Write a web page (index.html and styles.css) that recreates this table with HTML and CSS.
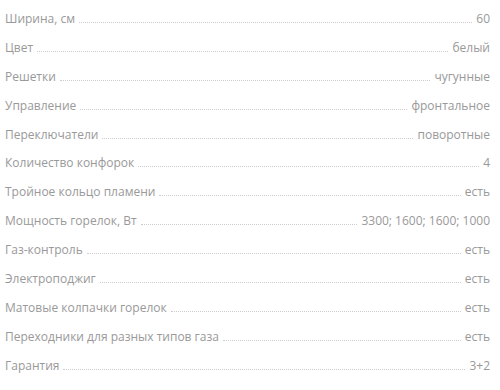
FILE: index.html
```html
<!DOCTYPE html>
<html lang="ru">
<head>
<meta charset="utf-8">
<link rel="stylesheet" href="styles.css">
</head>
<body>
<ul class="specs">
  <li class="row"><span class="name">Ширина, см</span><span class="dots"></span><span class="val">60</span></li>
  <li class="row"><span class="name">Цвет</span><span class="dots"></span><span class="val">белый</span></li>
  <li class="row"><span class="name">Решетки</span><span class="dots"></span><span class="val">чугунные</span></li>
  <li class="row"><span class="name">Управление</span><span class="dots"></span><span class="val">фронтальное</span></li>
  <li class="row"><span class="name">Переключатели</span><span class="dots"></span><span class="val">поворотные</span></li>
  <li class="row"><span class="name">Количество конфорок</span><span class="dots"></span><span class="val">4</span></li>
  <li class="row"><span class="name">Тройное кольцо пламени</span><span class="dots"></span><span class="val">есть</span></li>
  <li class="row"><span class="name">Мощность горелок, Вт</span><span class="dots"></span><span class="val">3300; 1600; 1600; 1000</span></li>
  <li class="row"><span class="name">Газ-контроль</span><span class="dots"></span><span class="val">есть</span></li>
  <li class="row"><span class="name">Электроподжиг</span><span class="dots"></span><span class="val">есть</span></li>
  <li class="row"><span class="name">Матовые колпачки горелок</span><span class="dots"></span><span class="val">есть</span></li>
  <li class="row"><span class="name">Переходники для разных типов газа</span><span class="dots"></span><span class="val">есть</span></li>
  <li class="row"><span class="name">Гарантия</span><span class="dots"></span><span class="val">3+2</span></li>
</ul>
</body>
</html>
```
FILE: styles.css
```css
html, body {
  margin: 0;
  padding: 0;
  background: #fff;
}
body {
  font-family: "Open Sans", "Liberation Sans", sans-serif;
  font-size: 12px;
  color: #999999;
}
.specs {
  list-style: none;
  margin: 0;
  padding: 5px 10px 0 5px;
}
.row {
  display: flex;
  align-items: baseline;
  height: 28.9px;
  line-height: 28.9px;
}
.name, .val {
  white-space: nowrap;
}
.dots {
  flex: 1;
  margin: 0 4px;
  border-bottom: 1px dotted #cccccc;
}
```
